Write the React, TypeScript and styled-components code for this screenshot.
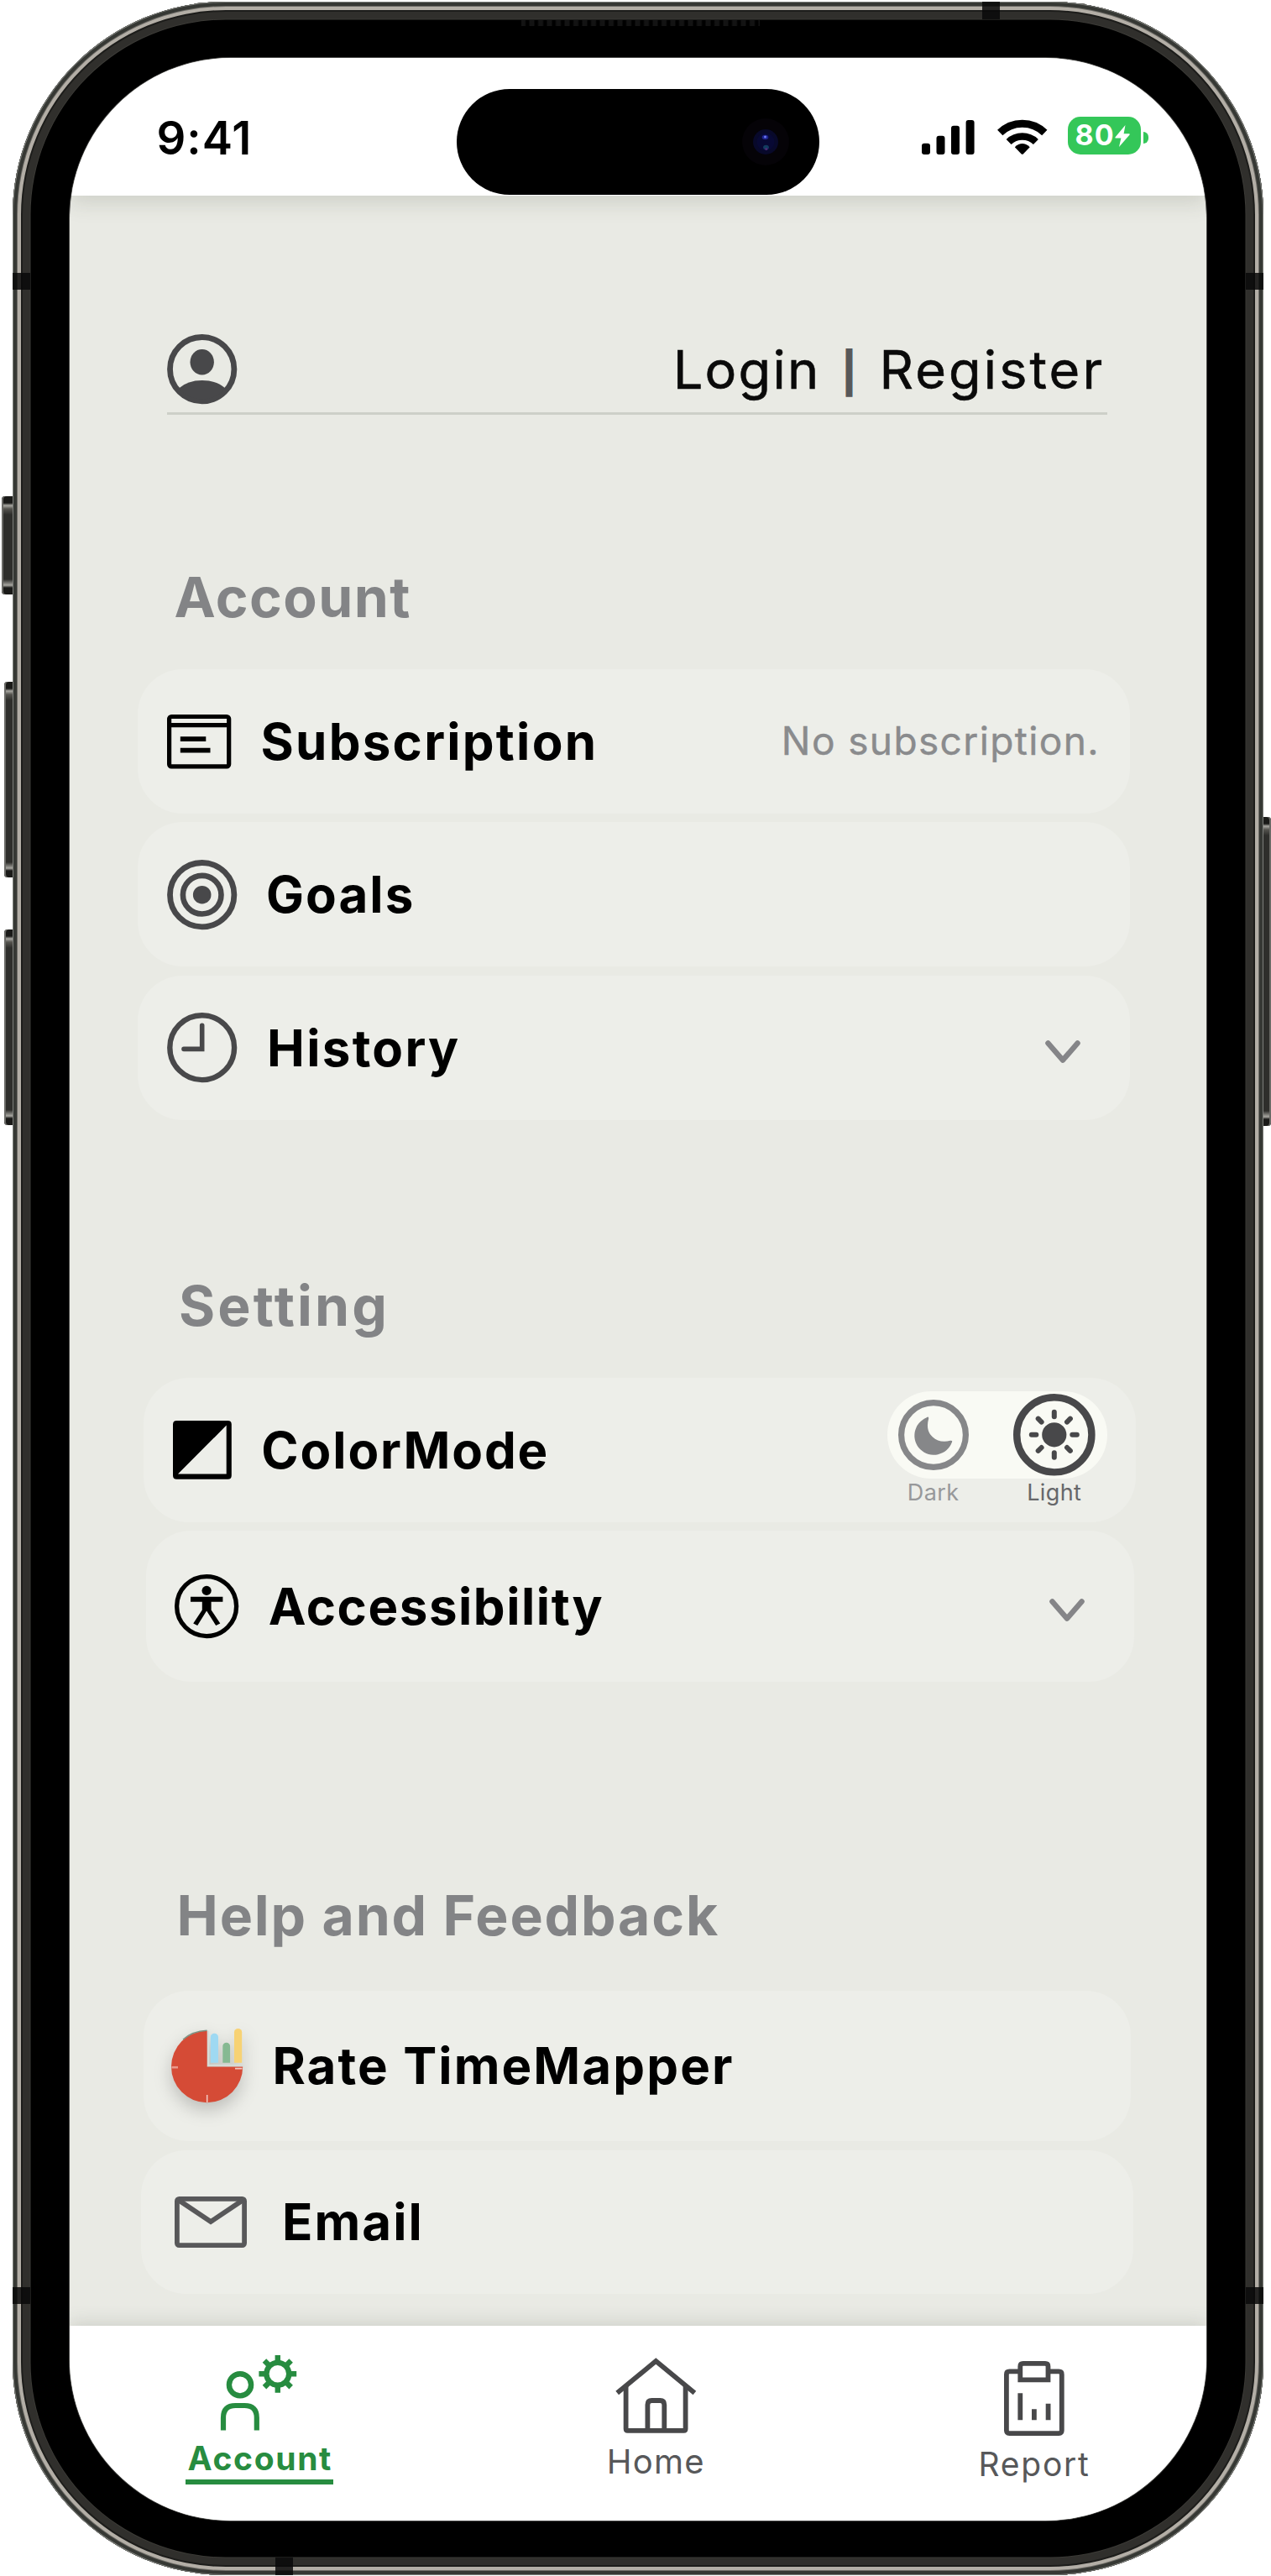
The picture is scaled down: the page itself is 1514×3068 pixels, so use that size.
import React from "react";
import styled, { createGlobalStyle } from "styled-components";

const ink = "#48484a";
const green = "#278c40";

const GlobalStyle = createGlobalStyle`
  * { box-sizing: border-box; }
  body { margin: 0; background: #fff; font-family: Inter, "Liberation Sans", sans-serif; }
  svg { display: block; flex: none; overflow: visible; }
`;

/* ---------- Device ---------- */

const Stage = styled.div`
  position: relative;
  width: 1514px;
  height: 3068px;
  padding: 1.5px 9.5px 0 14.5px;
  overflow: hidden;
`;

const Frame = styled.div`
  position: relative;
  width: 1490px;
  height: 3065px;
  padding: 67px 67.5px 65px 68px;
  border-radius: 254px;
  background: #000;
  box-shadow:
    inset 0 0 0 1px #7c7e7a,
    inset 0 0 0 5px #363834,
    inset 0 0 0 6px #6d6b66,
    inset 0 0 0 10px #b3aea6,
    inset 0 0 0 12px #1d1d1b,
    inset 0 0 0 20.5px #302f2c,
    inset 0 0 0 21.5px #3b3a36;
`;

const Screen = styled.div`
  position: relative;
  display: flex;
  flex-direction: column;
  height: 100%;
  border-radius: 192px;
  overflow: hidden;
  background: #e9eae4;
  box-shadow: 0 0 0 1px #4a4a48;
`;

const SideButton = styled.div<{ $top: number; $height: number; $depth: number; $right?: boolean }>`
  position: absolute;
  top: ${(p) => p.$top}px;
  ${(p) => (p.$right ? "right" : "left")}: ${(p) => (p.$right ? 0 : 16 - p.$depth)}px;
  width: ${(p) => p.$depth}px;
  height: ${(p) => p.$height}px;
  border-radius: ${(p) => (p.$right ? "0 4px 4px 0" : "4px 0 0 4px")};
  background: linear-gradient(
    #1a1a18 0, #1a1a18 8px, #a9a8a2 11px, #55544f 15px, #2e2e2b 22px,
    #2e2e2b calc(100% - 18px), #a9a8a2 calc(100% - 11px), #1a1a18 calc(100% - 8px), #1a1a18 100%
  );
  box-shadow: inset ${(p) => (p.$right ? "-2px" : "2px")} 0 0 #6a6a66;
`;

const SideBand = styled.div<{ $top: number; $right?: boolean }>`
  position: absolute;
  top: ${(p) => p.$top}px;
  ${(p) => (p.$right ? "right" : "left")}: 0;
  width: 21px;
  height: 20.5px;
  background: rgba(8, 8, 8, 0.84);
`;

const EdgeBand = styled.div<{ $left: number; $bottom?: boolean }>`
  position: absolute;
  left: ${(p) => p.$left}px;
  ${(p) => (p.$bottom ? "bottom" : "top")}: 0;
  width: 21px;
  height: 21px;
  background: rgba(8, 8, 8, 0.84);
`;

const Speaker = styled.div`
  position: absolute;
  top: 22.5px;
  left: 606px;
  width: 284px;
  height: 7px;
  background: repeating-linear-gradient(90deg, #131313 0 4px, #000 6px 8.5px, #131313 10.5px);
`;

/* ---------- Status bar ---------- */

const StatusBar = styled.header`
  position: relative;
  z-index: 2;
  flex: none;
  display: flex;
  justify-content: space-between;
  align-items: flex-end;
  height: 164px;
  padding: 0 69.3px 48.5px 104px;
  background: #fff;
  box-shadow: 0 8px 24px rgba(60, 66, 52, 0.16);
`;

const Clock = styled.div`
  margin-bottom: -7.4px;
  font-size: 54.5px;
  line-height: 54px;
  font-weight: 600;
  letter-spacing: 1px;
`;

const StatusIcons = styled.div`
  display: flex;
  align-items: flex-end;
`;

const WifiSlot = styled.div`
  margin: 0 24.2px 0 27.3px;
`;

const Battery = styled.div`
  display: flex;
  align-items: center;
  width: 87.4px;
  height: 44.6px;
  padding-left: 8.7px;
  border-radius: 15px;
  background: #34c759;
  color: #fff;
  font-size: 34px;
  line-height: 44.6px;
  font-weight: 700;
  letter-spacing: 1.2px;
`;

const BatteryTip = styled.div`
  width: 5.8px;
  height: 14px;
  margin: 0 0 13.3px 2.8px;
  border-radius: 0 6px 6px 0;
  background: #34c759;
`;

const Island = styled.div`
  position: absolute;
  z-index: 3;
  top: 37.5px;
  left: 461px;
  display: flex;
  justify-content: flex-end;
  align-items: center;
  width: 432px;
  height: 126px;
  padding-right: 36px;
  border-radius: 63px;
  background: #000;
`;

/* ---------- Content ---------- */

const Main = styled.main`
  flex: 1;
  min-height: 0;
  padding-top: 165px;
`;

const LoginRow = styled.div`
  display: flex;
  justify-content: space-between;
  align-items: center;
  width: 1119.8px;
  height: 96.5px;
  margin-left: 116.5px;
  padding-bottom: 10px;
  border-bottom: 3.3px solid #cdd0c8;
`;

const LoginLinks = styled.div`
  display: flex;
  align-items: center;
  padding: 2px 2.5px 0 0;
  font-size: 63px;
  line-height: 76px;
  color: #0a0a0a;
`;

const Link = styled.span<{ $spacing: number }>`
  letter-spacing: ${(p) => p.$spacing}px;
  -webkit-text-stroke: 0.6px currentColor;
`;

const Divider = styled.span`
  width: 70px;
  padding: 8px 2px 0 0;
  text-align: center;
  font-size: 47px;
  font-weight: 700;
  color: #58585a;
  -webkit-text-stroke: 1.4px currentColor;
`;

const Section = styled.section<{ $gapAbove: number }>`
  padding-top: ${(p) => p.$gapAbove}px;
`;

const Heading = styled.h2<{ $indent: number; $spacing: number; $gap: number }>`
  margin: 0 0 ${(p) => p.$gap}px ${(p) => p.$indent}px;
  font-size: 66px;
  line-height: 72px;
  font-weight: 700;
  letter-spacing: ${(p) => p.$spacing}px;
  color: #838486;
`;

const CardList = styled.div<{ $gap: number }>`
  display: flex;
  flex-direction: column;
  gap: ${(p) => p.$gap}px;
`;

const Card = styled.div<{ $indent: number; $width: number; $height: number; $padLeft: number; $padRight?: number }>`
  display: flex;
  align-items: center;
  width: ${(p) => p.$width}px;
  height: ${(p) => p.$height}px;
  margin-left: ${(p) => p.$indent}px;
  padding: 0 ${(p) => p.$padRight ?? 36.5}px 0 ${(p) => p.$padLeft}px;
  border-radius: 54px;
  background: #edeee9;
`;

const Label = styled.span<{ $gap: number; $spacing: number }>`
  flex: 1;
  margin-left: ${(p) => p.$gap}px;
  font-size: 60px;
  line-height: 72px;
  font-weight: 700;
  letter-spacing: ${(p) => p.$spacing}px;
  color: #000;
`;

const Note = styled.span`
  padding-bottom: 2px;
  font-size: 46px;
  line-height: 56px;
  letter-spacing: 1.38px;
  color: #8a8b8d;
  -webkit-text-stroke: 0.4px currentColor;
`;

const ChevronSlot = styled.div`
  padding-top: 11px;
`;

/* ---------- Colour mode switch ---------- */

const ModeSwitch = styled.div`
  align-self: flex-start;
  width: 261.4px;
  margin-top: 16.3px;
`;

const ModeRow = styled.div`
  display: flex;
  justify-content: space-between;
  align-items: center;
  padding: 0 14px 0 12.4px;
`;

const ModeTrack = styled(ModeRow)`
  height: 103.7px;
  border-radius: 52px;
  background: #f9faf4;
`;

const ModeNames = styled(ModeRow)`
  padding-top: 3.7px;
`;

const ModeName = styled.span<{ $active?: boolean }>`
  width: ${(p) => (p.$active ? 97.7 : 84)}px;
  text-align: center;
  font-size: 27px;
  line-height: 27px;
  letter-spacing: 0.4px;
  color: ${(p) => (p.$active ? "#66676a" : "#97989a")};
`;

/* ---------- Tab bar ---------- */

const TabBar = styled.nav`
  position: relative;
  z-index: 2;
  flex: none;
  display: flex;
  justify-content: space-between;
  align-items: flex-start;
  height: 231.5px;
  padding: 0 138.5px 0 138px;
  background: #fff;
  box-shadow: 0 -4px 20px rgba(60, 66, 52, 0.15);
`;

const Tab = styled.div<{ $top: number; $active?: boolean; $size?: number; $spacing: number }>`
  display: flex;
  flex-direction: column;
  align-items: center;
  padding-top: ${(p) => p.$top}px;
  font-size: ${(p) => p.$size ?? 39}px;
  line-height: 40px;
  font-weight: ${(p) => (p.$active ? 700 : 400)};
  letter-spacing: ${(p) => p.$spacing}px;
  color: ${(p) => (p.$active ? green : "#57585a")};
`;

const TabName = styled.span<{ $active?: boolean }>`
  margin-top: 14.2px;
  padding: ${(p) => (p.$active ? "0 1px 4.6px 3px" : "0")};
  border-bottom: ${(p) => (p.$active ? `6.7px solid ${green}` : "none")};
`;

/* ---------- Icons ---------- */

const SignalIcon = () => (
  <svg width="62.7" height="41" viewBox="0 0 62.7 41">
    <rect x="0" y="27.7" width="10" height="13.3" rx="3" />
    <rect x="17.5" y="18.7" width="10" height="22.3" rx="3" />
    <rect x="35" y="6.7" width="10" height="34.3" rx="3" />
    <rect x="52.6" y="0" width="10" height="41" rx="3" />
  </svg>
);

const WifiIcon = () => (
  <svg width="59.5" height="41" viewBox="0 0 59.5 41" fill="none" stroke="#000">
    <path d="M3.2 15 A38 38 0 0 1 56.3 15" strokeWidth="9" />
    <path d="M13.6 26 A23.5 23.5 0 0 1 45.9 26" strokeWidth="8.6" />
    <path d="M20.8 32.2 Q29.75 24 38.7 32.2 L31 40.2 Q29.75 41.4 28.5 40.2 Z" fill="#000" stroke="none" />
  </svg>
);

const BoltIcon = () => (
  <svg width="18" height="26" viewBox="0 0 18 26" fill="#fff">
    <path d="M12.5 0 L0.4 14.6 Q0 15.6 1 15.6 H7.4 L5 26 L17.6 11.4 Q18 10.3 17 10.3 H10.6 Z" />
  </svg>
);

const CameraLens = () => (
  <svg width="56" height="58" viewBox="0 0 56 58">
    <ellipse cx="28" cy="29" rx="28" ry="28" fill="#050307" />
    <circle cx="28" cy="29" r="15" fill="#08092a" />
    <circle cx="28" cy="29" r="10.5" fill="#080934" />
    <ellipse cx="27.5" cy="23.5" rx="3.8" ry="2.8" fill="#1f2390" />
    <circle cx="27.5" cy="23" r="1.5" fill="#6a78f0" />
    <ellipse cx="28.5" cy="35.5" rx="3.4" ry="2.8" fill="#123c60" />
    <circle cx="28.8" cy="37.5" r="1.6" fill="#4d2a76" />
  </svg>
);

const UserIcon = () => (
  <svg width="83.4" height="83.4" viewBox="0 0 83.4 83.4">
    <circle cx="41.7" cy="41.7" r="38.2" fill="none" stroke={ink} strokeWidth="6.8" />
    <ellipse cx="41.7" cy="33.3" rx="14.2" ry="15.2" fill={ink} />
    <path d="M14 64.5 Q24.5 55 41.7 55 Q59 55 69.4 64.5 A36 36 0 0 1 14 64.5 Z" fill={ink} />
  </svg>
);

const SubscriptionIcon = () => (
  <svg width="76.3" height="64.4" viewBox="0 0 76.3 64.4" fill="none" stroke="#000">
    <rect x="2.6" y="2.5" width="71.1" height="59.4" rx="2.6" strokeWidth="5.2" />
    <path d="M3 12.6 H73" strokeWidth="5.2" />
    <path d="M15.8 29.2 H46.3 M15.8 42.6 H51.5" strokeWidth="5.8" />
  </svg>
);

const GoalsIcon = () => (
  <svg width="83.4" height="83.4" viewBox="0 0 83.4 83.4" fill="none" stroke={ink}>
    <circle cx="41.7" cy="41.7" r="38.2" strokeWidth="6.8" />
    <circle cx="41.7" cy="41.7" r="22.8" strokeWidth="6.6" />
    <circle cx="41.7" cy="41.7" r="10.8" fill={ink} stroke="none" />
  </svg>
);

const HistoryIcon = () => (
  <svg width="83.4" height="83.4" viewBox="0 0 83.4 83.4" fill="none" stroke={ink}>
    <circle cx="41.7" cy="41.7" r="38.4" strokeWidth="6.4" />
    <path d="M41.7 15.2 V43.4 H20" strokeWidth="5.6" strokeLinecap="round" />
  </svg>
);

const ColorModeIcon = () => (
  <svg width="69.8" height="69.8" viewBox="0 0 69.8 69.8">
    <path
      fillRule="evenodd"
      d="M4.5 0 H65.3 Q69.8 0 69.8 4.5 V65.3 Q69.8 69.8 65.3 69.8 H4.5 Q0 69.8 0 65.3 V4.5 Q0 0 4.5 0 Z M63.7 5.6 L6 63.6 H63.7 Z"
    />
  </svg>
);

const AccessibilityIcon = () => (
  <svg width="76.3" height="76.3" viewBox="0 0 76.3 76.3">
    <circle cx="38.1" cy="38.1" r="35.5" fill="none" stroke="#000" strokeWidth="5.3" />
    <circle cx="38.1" cy="19.4" r="5.6" />
    <path d="M19 26.8 H57.4 V32.8 H43.6 V42.5 L54.3 58.4 L49.2 60.9 L38.1 43.6 L27.2 60.9 L22.2 58.4 L32.8 42.5 V32.8 H19 Z" />
  </svg>
);

const MoonIcon = () => (
  <svg width="84" height="84" viewBox="0 0 84 84">
    <circle cx="42" cy="42" r="38.4" fill="none" stroke="#868789" strokeWidth="7.2" />
    <path
      d="M33.4 21.6 Q36.4 19 36.2 22.4 C33 34 36.5 40 41 44.5 C46 49.5 54 51.2 62 48.8 Q65.2 48.2 63.8 51 A23 23 0 1 1 33.4 21.6 Z"
      fill="#868789"
    />
  </svg>
);

const rays = [0, 45, 90, 135, 180, 225, 270, 315];

const SunIcon = () => (
  <svg width="97.6" height="97.6" viewBox="-48.8 -48.8 97.6 97.6">
    <circle r="44.6" fill="none" stroke={ink} strokeWidth="8.4" />
    <circle r="14.6" fill={ink} />
    {rays.map((a) => (
      <path key={a} d="M0 -21.5 V-27" stroke={ink} strokeWidth="6" strokeLinecap="round" transform={`rotate(${a})`} />
    ))}
  </svg>
);

const LogoSvg = styled.svg`
  filter: drop-shadow(0 9px 10px rgba(0, 0, 0, 0.2));
`;

const TimeMapperLogo = () => (
  <LogoSvg width="85.2" height="89" viewBox="0 0 85.2 89">
    <path d="M44 2.6 V44 H85" fill="none" stroke="#d5dbd6" strokeWidth="2.6" />
    <path d="M42.7 2.6 A42.6 42.8 0 1 0 85.2 45.4 H42.7 Z" fill="#d54b36" />
    <path d="M14 13 Q25 3 42.5 2.2" fill="none" stroke="#7d9484" strokeWidth="1.4" />
    <path d="M0.4 46.2 H8" stroke="#e9998c" strokeWidth="2.6" />
    <path d="M76 47.6 H84.5 M42.7 79 V88" stroke="#f1c8c0" strokeWidth="1.6" />
    <path d="M46.8 40.7 V10 a4.6 4.2 0 0 1 9.2 0 V40.7 Z" fill="#9fd9f2" />
    <path d="M61.3 40.7 V21 a4.4 4.2 0 0 1 8.8 0 V40.7 Z" fill="#86b992" />
    <path d="M75 40.7 V4.2 a4.6 4.2 0 0 1 9.2 0 V40.7 Z" fill="#f7d274" />
  </LogoSvg>
);

const EmailIcon = () => (
  <svg width="86" height="61" viewBox="0 0 86 61" fill="none" stroke="#58585a" strokeWidth="5.8">
    <rect x="2.9" y="2.9" width="80.2" height="55.2" rx="2.5" />
    <path d="M5 4.5 L43 30 L81 4.5" />
  </svg>
);

const Chevron = () => (
  <svg width="42" height="28" viewBox="0 0 42 28" fill="none" stroke="#858588" strokeWidth="6.4">
    <path d="M3.4 3.4 L21 23.6 L38.6 3.4" strokeLinecap="round" strokeLinejoin="round" />
  </svg>
);

const AccountTabIcon = () => (
  <svg width="91" height="89.6" viewBox="0 0 91 89.6" fill="none" stroke={green}>
    <circle cx="23" cy="35.3" r="13.1" strokeWidth="6.4" />
    <path d="M3 89.6 V74.5 Q3 60 17.5 60 H28.3 Q42.8 60 42.8 74.5 V89.6" strokeWidth="6.2" />
    <g transform="translate(67.8 22.3)" strokeWidth="6.4">
      <circle r="13.4" />
      {rays.map((a) => (
        <path key={a} d="M0 -14 V-22.4" transform={`rotate(${a})`} />
      ))}
    </g>
  </svg>
);

const HomeTabIcon = () => (
  <svg width="96.6" height="89.7" viewBox="0 0 96.6 89.7" fill="none" stroke={ink} strokeWidth="5.8">
    <path d="M2.2 42 L48.3 4 L94.4 42" />
    <path d="M12.6 33.5 V84.7 Q12.6 86.8 14.7 86.8 H81.5 Q83.6 86.8 83.6 84.7 V33.5" />
    <path d="M38.4 86 V56 Q38.4 51 43.4 51 H53.3 Q58.3 51 58.3 56 V86" />
  </svg>
);

const ReportTabIcon = () => (
  <svg width="71.7" height="89" viewBox="0 0 71.7 89" fill="none" stroke={ink} strokeWidth="5.8">
    <path d="M17 12.4 H6.4 Q2.9 12.4 2.9 15.9 V82.6 Q2.9 86.1 6.4 86.1 H65.3 Q68.8 86.1 68.8 82.6 V15.9 Q68.8 12.4 65.3 12.4 H55" />
    <path d="M19.3 22.4 V6.4 Q19.3 2.9 22.8 2.9 H49 Q52.5 2.9 52.5 6.4 V22.4 Z" />
    <path d="M19.3 38.3 V70.3 M35.9 57.3 V70.3 M52.6 50.7 V70.3" />
  </svg>
);

/* ---------- Page ---------- */

export default function App() {
  return (
    <Stage>
      <GlobalStyle />
      <SideButton $top={590.5} $height={117} $depth={14} />
      <SideButton $top={811.5} $height={233} $depth={11.5} />
      <SideButton $top={1107} $height={233} $depth={11.5} />
      <SideButton $top={972.5} $height={368} $depth={11} $right />
      <Frame>
        <SideBand $top={323.2} />
        <SideBand $top={323.2} $right />
        <SideBand $top={2722} />
        <SideBand $top={2722} $right />
        <EdgeBand $left={1155} />
        <EdgeBand $left={313.5} $bottom />
        <Speaker />
        <Screen>
          <StatusBar>
            <Clock>9:41</Clock>
            <StatusIcons>
              <SignalIcon />
              <WifiSlot>
                <WifiIcon />
              </WifiSlot>
              <Battery>
                80
                <BoltIcon />
              </Battery>
              <BatteryTip />
            </StatusIcons>
          </StatusBar>
          <Island>
            <CameraLens />
          </Island>

          <Main>
            <LoginRow>
              <UserIcon />
              <LoginLinks>
                <Link $spacing={2.25}>Login</Link>
                <Divider>|</Divider>
                <Link $spacing={3.11}>Register</Link>
              </LoginLinks>
            </LoginRow>

            <Section $gapAbove={180.6}>
              <Heading $indent={125} $spacing={1.45} $gap={50.4}>Account</Heading>
              <CardList $gap={10.9}>
                <Card $indent={81.7} $width={1182.2} $height={171.6} $padLeft={34.8}>
                  <SubscriptionIcon />
                  <Label $gap={35.2} $spacing={2.26}>Subscription</Label>
                  <Note>No subscription.</Note>
                </Card>
                <Card $indent={81.7} $width={1182.2} $height={171.6} $padLeft={34.8}>
                  <GoalsIcon />
                  <Label $gap={34.7} $spacing={2.02}>Goals</Label>
                </Card>
                <Card $indent={81.7} $width={1182.2} $height={171.6} $padLeft={34.8} $padRight={59.4}>
                  <HistoryIcon />
                  <Label $gap={35.7} $spacing={2.3}>History</Label>
                  <ChevronSlot>
                    <Chevron />
                  </ChevronSlot>
                </Card>
              </CardList>
            </Section>

            <Section $gapAbove={185.2}>
              <Heading $indent={130.5} $spacing={3.1} $gap={49.8}>Setting</Heading>
              <CardList $gap={10}>
                <Card $indent={88.1} $width={1182.4} $height={172.6} $padLeft={35.4} $padRight={34.4}>
                  <ColorModeIcon />
                  <Label $gap={35.5} $spacing={1.9}>ColorMode</Label>
                  <ModeSwitch>
                    <ModeTrack>
                      <MoonIcon />
                      <SunIcon />
                    </ModeTrack>
                    <ModeNames>
                      <ModeName>Dark</ModeName>
                      <ModeName $active>Light</ModeName>
                    </ModeNames>
                  </ModeSwitch>
                </Card>
                <Card $indent={91.5} $width={1176.7} $height={179.6} $padLeft={33.7} $padRight={58.4}>
                  <AccessibilityIcon />
                  <Label $gap={35.8} $spacing={1.55}>Accessibility</Label>
                  <ChevronSlot>
                    <Chevron />
                  </ChevronSlot>
                </Card>
              </CardList>
            </Section>

            <Section $gapAbove={242.7}>
              <Heading $indent={128} $spacing={1.85} $gap={53.8}>Help and Feedback</Heading>
              <CardList $gap={11}>
                <Card $indent={88.3} $width={1176} $height={178.3} $padLeft={33}>
                  <TimeMapperLogo />
                  <Label $gap={35.4} $spacing={2.1}>Rate TimeMapper</Label>
                </Card>
                <Card $indent={85} $width={1182.6} $height={171.8} $padLeft={40.5}>
                  <EmailIcon />
                  <Label $gap={42} $spacing={2.05}>Email</Label>
                </Card>
              </CardList>
            </Section>
          </Main>

          <TabBar>
            <Tab $top={34.7} $active $spacing={1.67}>
              <AccountTabIcon />
              <TabName $active>Account</TabName>
            </Tab>
            <Tab $top={38} $size={40} $spacing={1.22}>
              <HomeTabIcon />
              <TabName>Home</TabName>
            </Tab>
            <Tab $top={41.7} $spacing={1.72}>
              <ReportTabIcon />
              <TabName>Report</TabName>
            </Tab>
          </TabBar>
        </Screen>
      </Frame>
    </Stage>
  );
}
